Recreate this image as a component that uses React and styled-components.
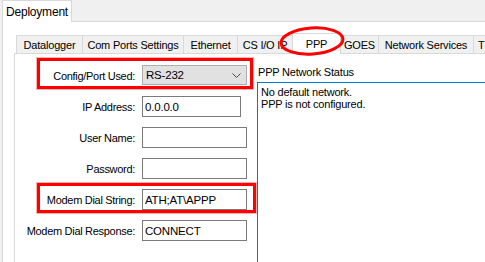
import React from "react";
import styled, { createGlobalStyle, css } from "styled-components";

const GlobalStyle = createGlobalStyle`
  html, body {
    margin: 0;
    padding: 0;
    background: #f0f0f0;
    overflow: hidden;
  }
  body {
    font-family: "Segoe UI", "Liberation Sans", Arial, sans-serif;
    font-size: 11px;
    letter-spacing: -0.2px;
    color: #000;
  }
`;

const Window = styled.div`
  width: 485px;
  height: 262px;
  display: flex;
  flex-direction: column;
  overflow: hidden;
`;

const OuterStrip = styled.div`
  height: 21px;
  display: flex;
  align-items: flex-end;
  padding-left: 2px;
`;

const OuterTab = styled.div`
  width: 70px;
  height: 22px;
  box-sizing: border-box;
  background: #fff;
  border: 1px solid #d9d9d9;
  border-bottom: none;
  display: flex;
  align-items: center;
  justify-content: center;
  font-size: 12px;
  position: relative;
  z-index: 1;
  margin-bottom: -1px;
`;

const OuterPanel = styled.div`
  flex: 1;
  margin-left: 2px;
  background: #fff;
  border: 1px solid #d9d9d9;
  border-right: none;
  border-bottom: none;
  padding: 11px 0 0 11px;
  display: flex;
  flex-direction: column;
`;

const TabStrip = styled.div`
  height: 20px;
  display: flex;
  align-items: flex-end;
  margin-left: 2px;
  position: relative;
  z-index: 2;
`;

const Tab = styled.div`
  position: relative;
  box-sizing: border-box;
  width: ${(p) => p.$w}px;
  flex-shrink: 0;
  height: 18px;
  margin-right: -1px;
  background: #f0f0f0;
  border: 1px solid #d9d9d9;
  border-bottom: none;
  display: flex;
  align-items: center;
  justify-content: ${(p) => (p.$start ? "flex-start" : "center")};
  padding-left: ${(p) => (p.$start ? 4 : 0)}px;
  white-space: nowrap;
  ${(p) =>
    p.$active &&
    css`
      height: 21px;
      margin-bottom: -1px;
      background: #fff;
      padding-bottom: 1px;
      z-index: 1;
    `}
`;

const Circle = styled.svg`
  position: absolute;
  left: -15px;
  top: -8px;
  pointer-events: none;
  overflow: visible;
`;

const InnerPanel = styled.div`
  flex: 1;
  background: #fff;
  border-top: 1px solid #d9d9d9;
  border-left: 1px solid #d9d9d9;
  display: flex;
`;

const FormColumn = styled.div`
  width: 242px;
  flex-shrink: 0;
  padding-top: 11px;
  display: flex;
  flex-direction: column;
  gap: 10px;
`;

const Row = styled.div`
  position: relative;
  height: 21px;
  display: flex;
  align-items: center;
  gap: 7px;
  ${(p) =>
    p.$highlight &&
    css`
      &::after {
        content: "";
        position: absolute;
        left: 22px;
        top: ${p.$top}px;
        right: ${p.$right}px;
        bottom: -3px;
        border: 3px solid #f00;
        box-shadow: 0 0 0 1px rgba(255, 0, 0, 0.3);
        pointer-events: none;
      }
    `}
`;

const Label = styled.div`
  width: 120px;
  text-align: right;
  white-space: nowrap;
  font-size: 11px;
  letter-spacing: -0.3px;
`;

const Field = styled.div`
  box-sizing: border-box;
  width: ${(p) => p.$w || 105}px;
  height: 21px;
  border: 1px solid #7a7a7a;
  background: #fff;
  padding-left: 2px;
  display: flex;
  align-items: center;
  font-size: 11.5px;
  white-space: nowrap;
`;

const Combo = styled(Field)`
  height: 20px;
  margin-top: -1px;
  background: #e1e1e1;
  border-color: #adadad;
  padding-left: 3px;
  padding-right: 5px;
  justify-content: space-between;
`;

const StatusColumn = styled.div`
  flex: 1;
  display: flex;
  flex-direction: column;
`;

const StatusLabel = styled.div`
  height: 16px;
  margin-top: 10px;
  margin-bottom: 2px;
  padding-left: 1px;
  display: flex;
  align-items: center;
  font-size: 11px;
  white-space: nowrap;
`;

const StatusBox = styled.div`
  width: 260px;
  height: 200px;
  border: 1px solid #0078d7;
  padding: 3px 3px;
  line-height: 12px;
  font-size: 11px;
  white-space: nowrap;
`;

const tabs = [
  ["Datalogger", 67],
  ["Com Ports Settings", 102],
  ["Ethernet", 55],
  ["CS I/O IP", 56],
  ["PPP", 49],
  ["GOES", 39],
  ["Network Services", 96],
  ["T", 20],
];

const Chevron = () => (
  <svg width="9" height="5" viewBox="0 0 9 5">
    <path d="M0.5 0.5 L4.5 4.5 L8.5 0.5" fill="none" stroke="#444" strokeWidth="1" />
  </svg>
);

export default function App() {
  return (
    <Window>
      <GlobalStyle />
      <OuterStrip>
        <OuterTab>Deployment</OuterTab>
      </OuterStrip>
      <OuterPanel>
        <TabStrip>
          {tabs.map(([name, w]) => (
            <Tab key={name} $w={w} $active={name === "PPP"} $start={name === "T"}>
              {name}
              {name === "PPP" && (
                <Circle width="70" height="32">
                  <ellipse
                    cx="34"
                    cy="15"
                    rx="31"
                    ry="13"
                    fill="none"
                    stroke="#f00"
                    strokeWidth="3"
                    transform="rotate(-4 34 15)"
                  />
                </Circle>
              )}
            </Tab>
          ))}
        </TabStrip>
        <InnerPanel>
          <FormColumn>
            <Row $highlight $top={-7} $right={4}>
              <Label>Config/Port Used:</Label>
              <Combo>
                <span>RS-232</span>
                <Chevron />
              </Combo>
            </Row>
            <Row>
              <Label>IP Address:</Label>
              <Field $w={99}>0.0.0.0</Field>
            </Row>
            <Row>
              <Label>User Name:</Label>
              <Field />
            </Row>
            <Row>
              <Label>Password:</Label>
              <Field />
            </Row>
            <Row $highlight $top={-6} $right={1}>
              <Label>Modem Dial String:</Label>
              <Field>ATH;AT\APPP</Field>
            </Row>
            <Row>
              <Label>Modem Dial Response:</Label>
              <Field>CONNECT</Field>
            </Row>
          </FormColumn>
          <StatusColumn>
            <StatusLabel>PPP Network Status</StatusLabel>
            <StatusBox>
              No default network.
              <br />
              PPP is not configured.
            </StatusBox>
          </StatusColumn>
        </InnerPanel>
      </OuterPanel>
    </Window>
  );
}
